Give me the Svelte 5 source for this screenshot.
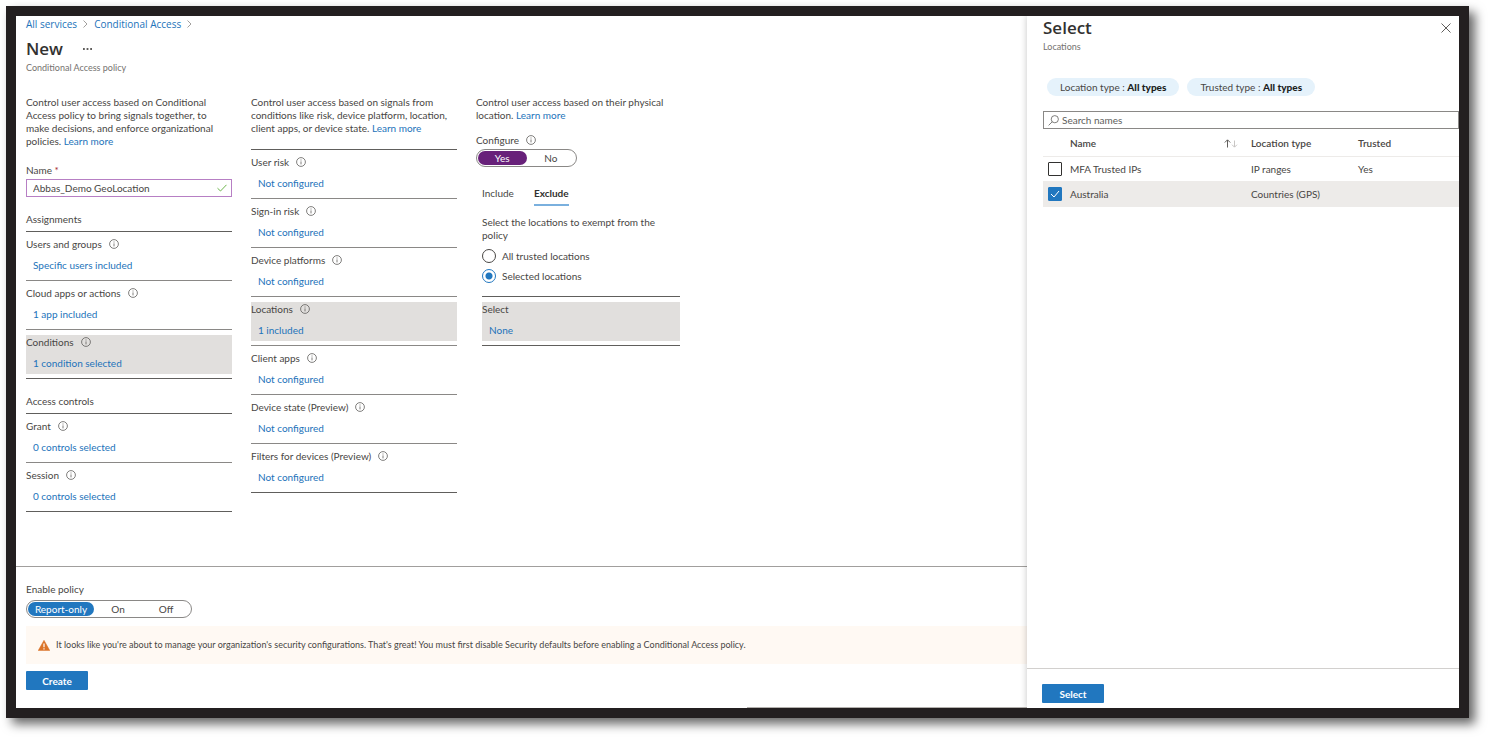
<script>
	let name = 'Abbas_Demo GeoLocation';
	let configure = 'Yes';
	let tab = 'Exclude';
	let exempt = 'selected';
	let mode = 'Report-only';
	let search = '';

	const assignments = [
		{ label: 'Users and groups', value: 'Specific users included' },
		{ label: 'Cloud apps or actions', value: '1 app included' },
		{ label: 'Conditions', value: '1 condition selected', active: true }
	];

	const controls = [
		{ label: 'Grant', value: '0 controls selected' },
		{ label: 'Session', value: '0 controls selected' }
	];

	const conditions = [
		{ label: 'User risk', value: 'Not configured' },
		{ label: 'Sign-in risk', value: 'Not configured' },
		{ label: 'Device platforms', value: 'Not configured' },
		{ label: 'Locations', value: '1 included', active: true },
		{ label: 'Client apps', value: 'Not configured' },
		{ label: 'Device state (Preview)', value: 'Not configured' },
		{ label: 'Filters for devices (Preview)', value: 'Not configured' }
	];

	let locations = [
		{ name: 'MFA Trusted IPs', type: 'IP ranges', trusted: 'Yes', checked: false },
		{ name: 'Australia', type: 'Countries (GPS)', trusted: '', checked: true }
	];
</script>

{#snippet info()}
	<svg class="info" viewBox="0 0 10 10" aria-hidden="true">
		<circle cx="5" cy="5" r="4.4" />
		<path d="M5 4.4v3M5 2.5v1" />
	</svg>
{/snippet}

{#snippet settings(items)}
	<ul class="settings">
		{#each items as item}
			<li>
				<div class="setting" class:active={item.active}>
					<span class="label">{item.label} {@render info()}</span>
					<a href="#edit">{item.value}</a>
				</div>
			</li>
		{/each}
	</ul>
{/snippet}

<div class="frame">
	<main>
		<div class="content">
			<nav>
				<a href="#services">All services</a>
				<svg class="chevron" viewBox="0 0 5 8"><path d="M.5 .5L4 4L.5 7.5" /></svg>
				<a href="#access">Conditional Access</a>
				<svg class="chevron" viewBox="0 0 5 8"><path d="M.5 .5L4 4L.5 7.5" /></svg>
			</nav>
			<header>
				<h1>New</h1>
				<button class="more" aria-label="More">
					<svg viewBox="0 0 10 2"><path d="M0 0h2v2H0zM4 0h2v2H4zM8 0h2v2H8z" /></svg>
				</button>
			</header>
			<p class="subtitle">Conditional Access policy</p>

			<div class="columns">
				<section>
					<p>
						Control user access based on Conditional Access policy to bring signals together, to
						make decisions, and enforce organizational policies. <a href="#learn">Learn more</a>
					</p>
					<div class="field">
						<label for="name">Name <span class="required">*</span></label>
						<div class="name-box">
							<input id="name" type="text" bind:value={name} />
							<svg viewBox="0 0 10 8"><path d="M.5 4.2L3.5 7L9.5 .8" /></svg>
						</div>
					</div>
					<h2>Assignments</h2>
					{@render settings(assignments)}
					<h2>Access controls</h2>
					{@render settings(controls)}
				</section>

				<section>
					<p>
						Control user access based on signals from conditions like risk, device platform, location,
						client apps, or device state. <a href="#learn">Learn more</a>
					</p>
					<div class="conditions">
						{@render settings(conditions)}
					</div>
				</section>

				<section>
					<p>
						Control user access based on their physical location. <a href="#learn">Learn more</a>
					</p>
					<div class="configure">
						<span class="label">Configure {@render info()}</span>
						<div class="toggle purple">
							{#each ['Yes', 'No'] as option}
								<button class:on={configure === option} aria-pressed={configure === option} on:click={() => (configure = option)}>{option}</button>
							{/each}
						</div>
					</div>
					<div class="scope">
						<div class="tabs" role="tablist">
							{#each ['Include', 'Exclude'] as t}
								<button role="tab" class:current={tab === t} aria-selected={tab === t} on:click={() => (tab = t)}>{t}</button>
							{/each}
						</div>
						<p>Select the locations to exempt from the policy</p>
						<div class="radios">
							<label><input type="radio" name="exempt" value="all" bind:group={exempt} /> All trusted locations</label>
							<label><input type="radio" name="exempt" value="selected" bind:group={exempt} /> Selected locations</label>
						</div>
						<ul class="settings">
							<li>
								<div class="setting active">
									<span class="label">Select</span>
									<a href="#select">None</a>
								</div>
							</li>
						</ul>
					</div>
				</section>
			</div>
		</div>

		<footer>
			<span class="label">Enable policy</span>
			<div class="toggle modes">
				{#each ['Report-only', 'On', 'Off'] as option}
					<button class:on={mode === option} aria-pressed={mode === option} on:click={() => (mode = option)}>{option}</button>
				{/each}
			</div>
			<div class="banner">
				<svg viewBox="0 0 12 11">
					<path class="sign" d="M6 .3L11.8 10.6H.2z" />
					<path class="mark" d="M6 3.6v3.6M6 8.2v1.3" />
				</svg>
				<span>It looks like you're about to manage your organization's security configurations. That's great! You must first disable Security defaults before enabling a Conditional Access policy.</span>
			</div>
			<button class="primary">Create</button>
			<div class="scrollbar"></div>
		</footer>
	</main>

	<aside>
		<div class="panel-body">
			<div class="panel-head">
				<h1>Select</h1>
				<button class="close" aria-label="Close">
					<svg viewBox="0 0 10 10"><path d="M.5 .5L9.5 9.5M9.5 .5L.5 9.5" /></svg>
				</button>
			</div>
			<p class="subtitle">Locations</p>

			<div class="pills">
				<button>Location type : <b>All types</b></button>
				<button>Trusted type : <b>All types</b></button>
			</div>

			<div class="search">
				<svg viewBox="0 0 11 11"><circle cx="6.8" cy="4.2" r="3.6" /><path d="M4.2 6.8L.6 10.4" /></svg>
				<input type="text" placeholder="Search names" aria-label="Search names" bind:value={search} />
			</div>

			<table>
				<colgroup>
					<col class="c-check" />
					<col class="c-name" />
					<col class="c-type" />
					<col />
				</colgroup>
				<thead>
					<tr>
						<th></th>
						<th>
							<div class="sortable">
								Name
								<svg viewBox="0 0 14 9">
									<path d="M3.5 8.5V1M.8 3.5L3.5 .8L6.2 3.5" />
									<path class="dim" d="M10.5 1.5V8M8 5.7L10.5 8.2L13 5.7" />
								</svg>
							</div>
						</th>
						<th>Location type</th>
						<th>Trusted</th>
					</tr>
				</thead>
				<tbody>
					{#each locations as location}
						<tr class:selected={location.checked}>
							<td><input type="checkbox" aria-label={location.name} bind:checked={location.checked} /></td>
							<td>{location.name}</td>
							<td>{location.type}</td>
							<td>{location.trusted}</td>
						</tr>
					{/each}
				</tbody>
			</table>
		</div>
		<div class="panel-foot">
			<button class="primary">Select</button>
		</div>
	</aside>
</div>

<style>
	:global(body) {
		margin: 0;
		background: #fff;
	}

	* {
		box-sizing: border-box;
	}

	.frame {
		display: flex;
		min-height: calc(100vh - 25px);
		margin: 6px 19px 19px 6px;
		border: 10px solid #231f20;
		background: #fff;
		box-shadow: 6px 6px 10px rgba(0, 0, 0, 0.6);
		color: #484644;
		font: 10px/14px Lato, 'Open Sans', sans-serif;
	}

	h1, h2, p, ul {
		margin: 0;
		padding: 0;
	}

	h1 {
		color: #323130;
		font-family: 'Open Sans', sans-serif;
		font-size: 17px;
		font-weight: 600;
		line-height: 24px;
	}

	a {
		color: #2273ba;
		text-decoration: none;
	}

	button, input {
		margin: 0;
		padding: 0;
		border: 0;
		background: none;
		color: inherit;
		font: inherit;
	}

	button {
		cursor: pointer;
	}

	svg {
		flex: none;
		fill: none;
		stroke: #605e5c;
	}

	main {
		display: flex;
		flex: 1;
		flex-direction: column;
		justify-content: space-between;
		min-width: 0;
	}

	.content {
		padding: 0 10px 40px;
	}

	nav {
		display: flex;
		align-items: center;
		gap: 6px;
		font-family: 'Open Sans', sans-serif;
		line-height: 16px;
	}

	.chevron {
		width: 5px;
		height: 8px;
		stroke: #a19f9d;
	}

	header {
		display: flex;
		align-items: center;
		gap: 20px;
		margin-top: 5px;
	}

	.more svg {
		display: block;
		width: 9px;
		height: 2px;
		fill: #605e5c;
		stroke: none;
	}

	.subtitle {
		color: #75726f;
		font-size: 9px;
	}

	.columns {
		display: flex;
		gap: 19px;
		margin-top: 21px;
	}

	section {
		width: 206px;
	}

	section p {
		line-height: 13px;
	}

	.label {
		display: flex;
		align-items: center;
		gap: 7px;
	}

	.info {
		width: 10px;
		height: 10px;
		stroke-width: 0.8;
	}

	.field {
		margin-top: 15px;
	}

	.field label {
		display: block;
	}

	.required {
		color: #a4262c;
	}

	.name-box {
		display: flex;
		align-items: center;
		height: 18px;
		margin-top: 2px;
		padding: 0 4px 0 6px;
		border: 1px solid #b77fc4;
	}

	.name-box input {
		flex: 1;
		min-width: 0;
		outline: none;
	}

	.name-box svg {
		width: 10px;
		height: 8px;
		stroke: #6bb44a;
	}

	h2 {
		margin-top: 15px;
		padding-bottom: 5px;
		font-size: 10px;
		font-weight: 400;
	}

	.settings {
		border-top: 1px solid #605e5c;
		list-style: none;
	}

	.settings li {
		padding: 5px 0 4px;
		border-bottom: 1px solid #8a8886;
	}

	.settings li:last-child {
		border-color: #605e5c;
	}

	.setting {
		height: 39px;
	}

	.setting a {
		display: block;
		margin-top: 7px;
		padding-left: 7px;
	}

	.active {
		background: #e1dfdd;
	}

	.conditions {
		margin-top: 14px;
	}

	.configure {
		margin-top: 11px;
	}

	.toggle {
		display: grid;
		grid-template-columns: 1fr 1fr;
		width: 101px;
		height: 18px;
		margin-top: 2px;
		padding: 1px;
		border: 1px solid #8a8886;
		border-radius: 9px;
	}

	.toggle button {
		border-radius: 7px;
		line-height: 14px;
	}

	.toggle .on {
		background: #2177bf;
		color: #fff;
	}

	.purple .on {
		background: #68217a;
	}

	.modes {
		grid-template-columns: 66px 1fr 1fr;
		width: 166px;
		margin-top: 4px;
	}

	.scope {
		margin-top: 18px;
		padding: 0 2px 0 6px;
	}

	.tabs {
		display: flex;
		gap: 20px;
		margin-bottom: 10px;
	}

	.tabs button {
		padding-bottom: 3px;
		border-bottom: 2px solid transparent;
		line-height: 16px;
	}

	.tabs .current {
		border-color: #7ab0de;
		color: #323130;
		font-weight: 700;
	}

	.radios {
		display: grid;
		margin: 4px 0 10px;
	}

	.radios label {
		display: flex;
		align-items: center;
		gap: 6px;
		height: 20px;
	}

	.radios input {
		appearance: none;
		width: 14px;
		height: 14px;
		border: 1px solid #484644;
		border-radius: 50%;
	}

	.radios input:checked {
		border-color: #2177bf;
		background: radial-gradient(#2177bf 3px, transparent 4px);
	}

	footer {
		padding: 15px 0 0 10px;
		border-top: 1px solid #a19f9d;
	}

	.banner {
		display: flex;
		align-items: center;
		gap: 6px;
		min-height: 38px;
		margin: 8px 0 7px;
		padding: 0 12px;
		background: #fff9f3;
		font-size: 9px;
	}

	.banner svg {
		width: 12px;
		height: 11px;
	}

	.sign {
		fill: #db7327;
		stroke: #db7327;
		stroke-width: 0.5;
		stroke-linejoin: round;
	}

	.mark {
		stroke: #fff;
		stroke-width: 1.2;
	}

	.primary {
		display: block;
		min-width: 62px;
		height: 19px;
		border-radius: 1px;
		background: #2177bf;
		color: #fff;
		font-weight: 700;
	}

	.scrollbar {
		width: 28%;
		height: 1px;
		margin: 17px 0 0 auto;
		background: #b3b0ad;
	}

	aside {
		display: flex;
		flex-direction: column;
		justify-content: space-between;
		width: 432px;
		box-shadow: -1px 0 6px rgba(0, 0, 0, 0.18);
		clip-path: inset(0 0 0 -8px);
	}

	.panel-body {
		padding-left: 16px;
	}

	.panel-head {
		display: flex;
		align-items: center;
		justify-content: space-between;
		padding-right: 8px;
	}

	.close svg {
		display: block;
		width: 10px;
		height: 10px;
	}

	.pills {
		display: flex;
		gap: 8px;
		margin: 24px 4px 15px;
	}

	.pills button {
		height: 18px;
		padding: 0 13px;
		border-radius: 9px;
		background: #e5f2fb;
	}

	.pills b {
		color: #201f1e;
		font-weight: 900;
	}

	.search {
		display: flex;
		align-items: center;
		gap: 3px;
		height: 18px;
		padding: 0 4px;
		border: 1px solid #8a8886;
	}

	.search svg {
		width: 11px;
		height: 11px;
		stroke-width: 0.8;
	}

	.search input {
		flex: 1;
		outline: none;
	}

	.search input::placeholder {
		color: #605e5c;
		opacity: 1;
	}

	table {
		width: 100%;
		border-collapse: collapse;
		table-layout: fixed;
	}

	.c-check {
		width: 27px;
	}

	.c-name {
		width: 181px;
	}

	.c-type {
		width: 107px;
	}

	th, td {
		height: 25px;
		padding: 0;
		border-bottom: 1px solid #edebe9;
		text-align: left;
	}

	th {
		height: 27px;
		padding-top: 2px;
		font-weight: 600;
	}

	.sortable {
		display: flex;
		align-items: center;
		justify-content: space-between;
		padding-right: 13px;
	}

	.sortable svg {
		width: 14px;
		height: 9px;
	}

	.sortable .dim {
		stroke: #c8c6c4;
	}

	.selected td {
		background: #edebe9;
	}

	td input {
		display: block;
		appearance: none;
		width: 14px;
		height: 14px;
		margin-left: 5px;
		border: 1px solid #323130;
		border-radius: 1px;
	}

	td input:checked {
		border-color: #2177bf;
		background: #2177bf url("data:image/svg+xml,%3Csvg xmlns='http://www.w3.org/2000/svg' viewBox='0 0 12 12'%3E%3Cpath d='M2 6l3 3 5-6' fill='none' stroke='white'/%3E%3C/svg%3E");
	}

	.panel-foot {
		padding: 15px 15px 5px;
		border-top: 1px solid #d2d0ce;
	}
</style>
